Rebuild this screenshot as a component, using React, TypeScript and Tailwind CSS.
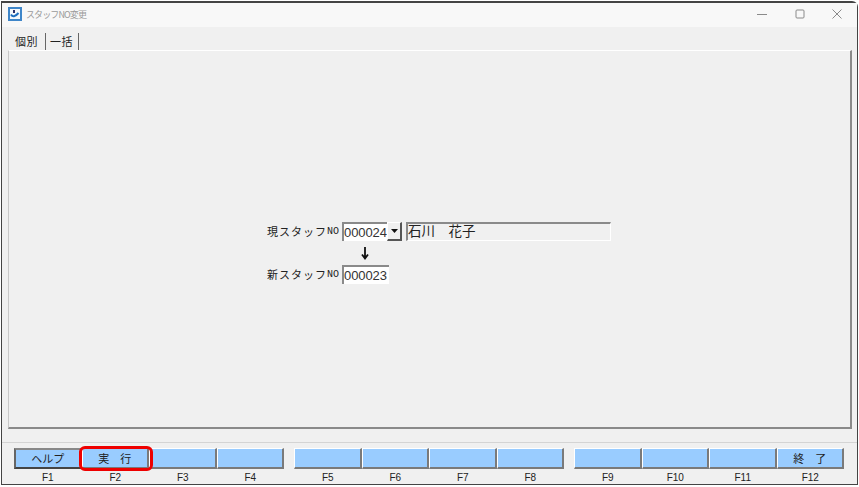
const jp = "font-['Noto_Sans_CJK_JP',sans-serif]";
const latin = "font-['Liberation_Sans',sans-serif]";

const keyGroups = [
  [
    { key: "F1", label: "ヘルプ", focused: true },
    { key: "F2", label: "実　行", highlighted: true },
    { key: "F3" },
    { key: "F4" },
  ],
  [{ key: "F5" }, { key: "F6" }, { key: "F7" }, { key: "F8" }],
  [{ key: "F9" }, { key: "F10" }, { key: "F11" }, { key: "F12", label: "終　了" }],
];

type FnKey = { key: string; label?: string; highlighted?: boolean; focused?: boolean };

const FnButton = ({ item }: { item: FnKey }) => (
  <div className="flex w-[67.5px] flex-col items-center">
    <div
      className={
        item.focused
          ? "relative h-[21px] w-full border-2 border-t-[#888] border-l-[#666] border-r-[#555] border-b-[#444] bg-[#99ccff]"
          : "relative h-[21px] w-full border-t border-l border-t-white border-l-white border-r-2 border-b-2 border-r-[#7a7a7a] border-b-[#7a7a7a] bg-[#99ccff]"
      }
    >
      <div className={`${jp} flex h-full items-center justify-center text-[11px] leading-none text-[#222]`}>{item.label}</div>
      {item.highlighted && (
        <div className="absolute -left-[4px] -top-[3px] z-10 h-[25px] w-[74px] rounded-[6px] border-[3px] border-[#ee0000]" />
      )}
    </div>
    <div className={`${latin} text-[10px] leading-[17px] text-[#222]`}>{item.key}</div>
  </div>
);

const StaffLabel = ({ text }: { text: string }) => (
  <div className={`${jp} flex w-[75px] items-center text-[11px] leading-none tracking-[1px] text-[#222]`}>
    {text}
    <span className="font-['Liberation_Mono',monospace] text-[10px] leading-none tracking-[0px]">NO</span>
  </div>
);

export default function App() {
  return (
    <div className="h-[487px] w-[859px] bg-white pt-px pr-px pb-[2px] pl-px">
      <div className="flex h-full flex-col rounded-tr-[6px] border-t-2 border-r border-b border-l border-[#444] bg-[#f0f0f0]">
        <div className="flex h-[24px] shrink-0 items-center bg-[#f8f8f8] pb-[2px] pl-[6px]">
          <svg width="14" height="14" viewBox="0 0 14 14">
            <rect x="1" y="1" width="12" height="12" fill="#f4f8fc" stroke="#3f86c9" strokeWidth="2" />
            <path d="M3 7.5c1.5 2.5 4 2.5 7.5-1.5" fill="none" stroke="#1f6fc0" strokeWidth="2" />
            <path d="M6 3v3" stroke="#2a2f6a" strokeWidth="2" />
          </svg>
          <div className={`${jp} ml-[4px] text-[9px] leading-none tracking-[-0.9px] text-[#9a9a9a]`}>スタッフNO変更</div>
          <div className="ml-auto mr-[15px] flex items-center gap-[27.5px]">
            <svg width="10" height="10" viewBox="0 0 10 10">
              <path d="M0 5.5h10" stroke="#8a8a8a" />
            </svg>
            <svg width="10" height="10" viewBox="0 0 10 10">
              <rect x="1" y="1" width="8" height="8" rx="1" fill="none" stroke="#8a8a8a" />
            </svg>
            <svg width="10" height="10" viewBox="0 0 10 10">
              <path d="M0.5 0.5l9 9M9.5 0.5l-9 9" stroke="#8a8a8a" />
            </svg>
          </div>
        </div>

        <div className="flex h-[23px] shrink-0 items-end pl-[6px] text-[11px] leading-none tracking-[0.5px] text-[#222]">
          <div className={`${jp} flex h-[17px] w-[38px] items-center border-r border-[#666] pl-[7px]`}>個別</div>
          <div className={`${jp} flex h-[17px] w-[33px] items-center border-r border-[#666] pl-[4px]`}>一括</div>
        </div>

        <div className="ml-[6px] flex h-[379px] w-[844px] shrink-0 flex-col border-t border-r-2 border-b-2 border-l border-t-white border-r-[#8a8a8a] border-b-[#8a8a8a] border-l-[#c8c8c8] pt-[171px] pl-[258px]">
          <div className="flex h-[19px] items-center">
            <StaffLabel text="現スタッフ" />
            <div className={`${latin} flex h-[19px] w-[45px] items-center border-t-2 border-l-2 border-t-[#8a8a8a] border-l-[#8a8a8a] bg-white text-[13px] leading-none tracking-[-0.1px] text-[#333]`}>000024</div>
            <div className="flex h-[19px] w-[15px] items-center justify-center border-t border-l border-t-white border-l-white border-r-2 border-b-2 border-r-[#555] border-b-[#555] bg-[#f0f0f0]">
              <svg width="7" height="4" viewBox="0 0 7 4">
                <path d="M0 0h7L3.5 4z" fill="#111" />
              </svg>
            </div>
            <div className={`${jp} ml-[4px] flex h-[19px] w-[205px] items-center border-t-2 border-r border-b border-l-2 border-t-[#8a8a8a] border-r-white border-b-white border-l-[#8a8a8a] pb-[2px] text-[13.5px] leading-none text-[#222]`}>石川　花子</div>
          </div>
          <div className="flex h-[24px] items-center pl-[93px]">
            <svg width="10" height="14" viewBox="0 0 10 14">
              <path d="M5 1v11M2 8.5L5 12.5 8 8.5" fill="none" stroke="#111" strokeWidth="1.8" />
            </svg>
          </div>
          <div className="flex h-[19px] items-center">
            <StaffLabel text="新スタッフ" />
            <div className={`${latin} flex h-[19px] w-[47px] items-center border-t-2 border-l-2 border-t-[#8a8a8a] border-l-[#8a8a8a] bg-white text-[13px] leading-none tracking-[-0.1px] text-[#333]`}>000023</div>
          </div>
        </div>

        <div className="mt-[13px] flex flex-1 justify-between border-t border-t-[#d4d4d4] pt-[5px] pr-[13px] pl-[12px]">
          {keyGroups.map((group, i) => (
            <div key={i} className="flex">
              {group.map((item) => (
                <FnButton key={item.key} item={item} />
              ))}
            </div>
          ))}
        </div>
      </div>
    </div>
  );
}
